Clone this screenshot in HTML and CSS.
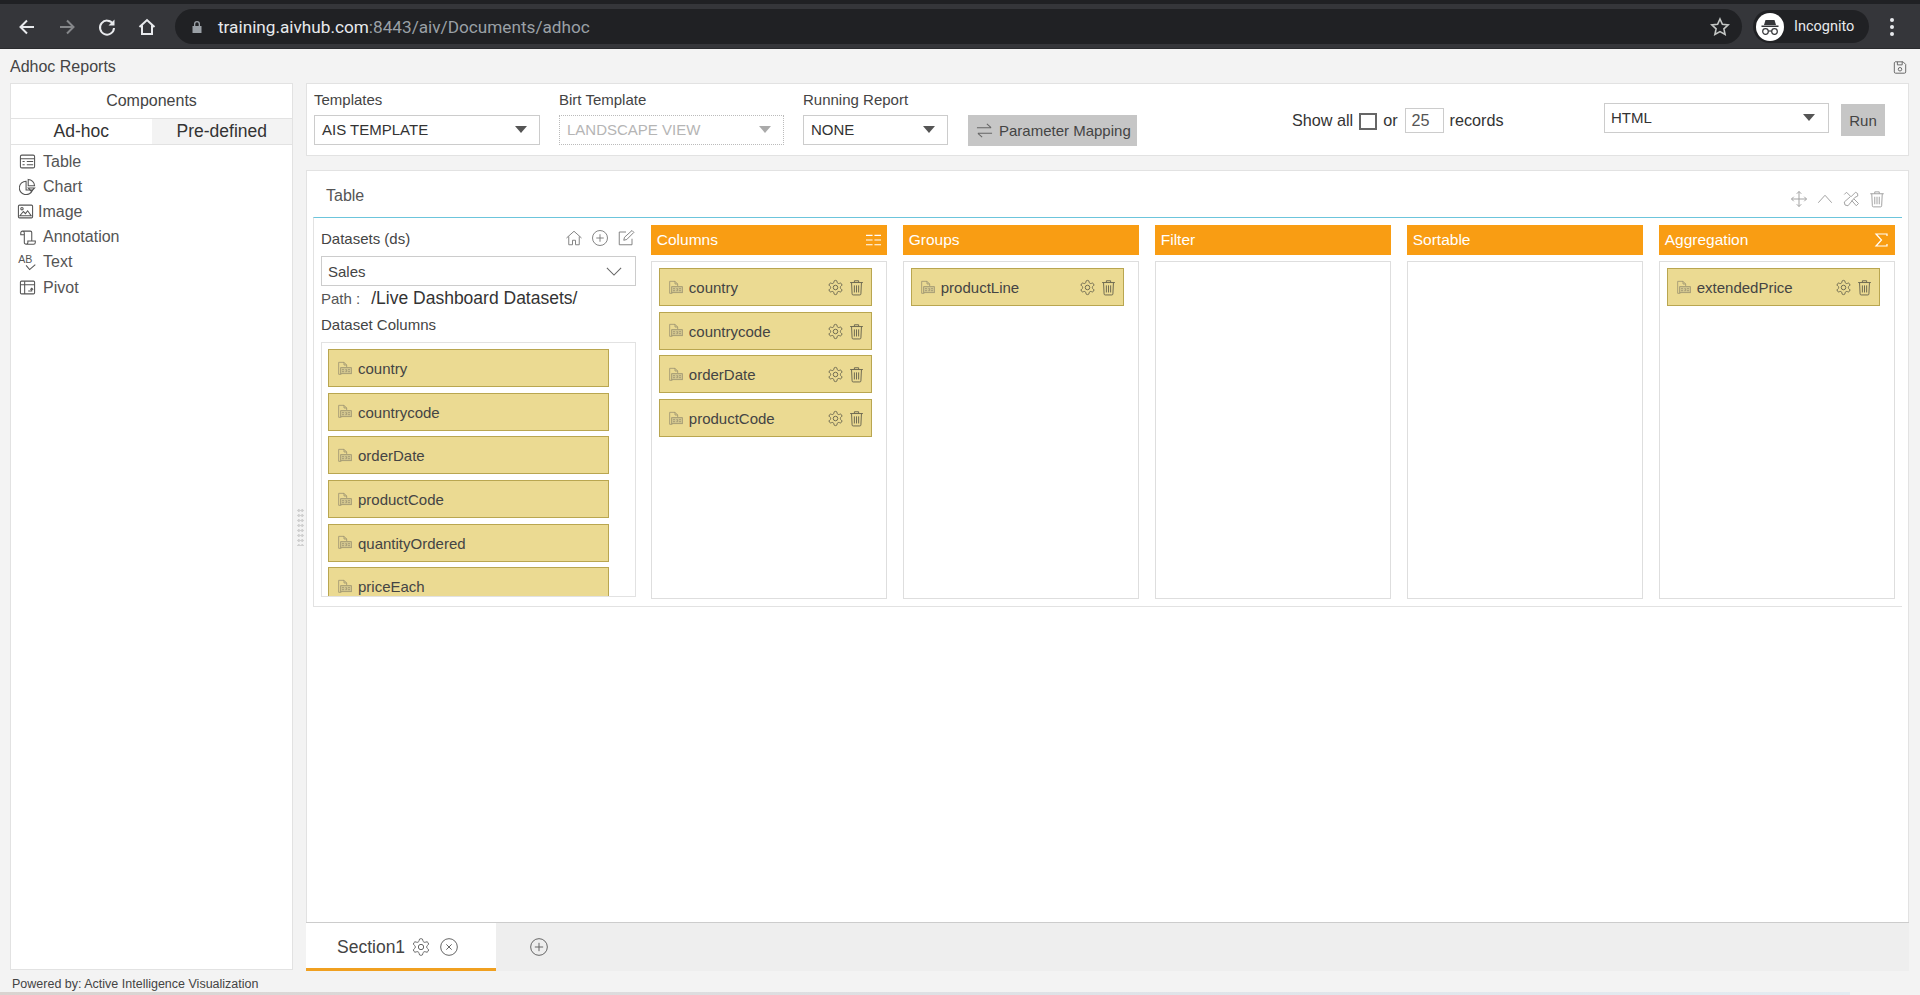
FILE: index.html
```html
<!DOCTYPE html>
<html lang="en">
<head>
<meta charset="utf-8">
<title>Adhoc Reports</title>
<link rel="stylesheet" href="styles.css">
</head>
<body>
<svg class="sprite" xmlns="http://www.w3.org/2000/svg">
  <symbol id="gear" viewBox="0 0 24 24"><path d="M12.22 2h-.44a2 2 0 0 0-2 2v.18a2 2 0 0 1-1 1.73l-.43.25a2 2 0 0 1-2 0l-.15-.08a2 2 0 0 0-2.73.73l-.22.38a2 2 0 0 0 .73 2.73l.15.1a2 2 0 0 1 1 1.72v.51a2 2 0 0 1-1 1.74l-.15.09a2 2 0 0 0-.73 2.73l.22.38a2 2 0 0 0 2.73.73l.15-.08a2 2 0 0 1 2 0l.43.25a2 2 0 0 1 1 1.73V20a2 2 0 0 0 2 2h.44a2 2 0 0 0 2-2v-.18a2 2 0 0 1 1-1.73l.43-.25a2 2 0 0 1 2 0l.15.08a2 2 0 0 0 2.73-.73l.22-.39a2 2 0 0 0-.73-2.73l-.15-.08a2 2 0 0 1-1-1.74v-.5a2 2 0 0 1 1-1.74l.15-.09a2 2 0 0 0 .73-2.73l-.22-.38a2 2 0 0 0-2.73-.73l-.15.08a2 2 0 0 1-2 0l-.43-.25a2 2 0 0 1-1-1.73V4a2 2 0 0 0-2-2z"/><circle cx="12" cy="12" r="3.2"/></symbol>
  <symbol id="trash" viewBox="0 0 24 24"><path d="M3 5h18M9 5V2.5h6V5M5 5l.8 16a1.5 1.5 0 0 0 1.5 1.5h9.4a1.5 1.5 0 0 0 1.5-1.5L19 5M9 9v10M12 9v10M15 9v10"/></symbol>
  <symbol id="csv" viewBox="0 0 24 24"><path d="M4 12V2h8l4 4v3M12 2v4h4M4 12v8h4"/><rect x="7" y="10" width="16" height="9" fill="#d4c78f"/><path d="M9 13h3M9 16h3M14 13h2v3h-2M18 13h3M18 16h3"/></symbol>
  <symbol id="tableic" viewBox="0 0 24 24"><rect x="2" y="3" width="20" height="18" rx="2"/><path d="M2 8h20M5 12h3M11 12h9M5 16.500h3M11 16.500h9"/></symbol>
  <symbol id="chartic" viewBox="0 0 24 24"><path d="M10 4.500a9.500 9.500 0 1 0 9 12.500h-9z"/><path d="M13 2a9.500 9.500 0 0 1 9 9h-9zM13 14h9l-4.500 5z"/></symbol>
  <symbol id="imageic" viewBox="0 0 24 24"><rect x="2" y="3" width="20" height="18" rx="1.500"/><circle cx="7" cy="8" r="1.700"/><path d="M4 18l5-6 3 3 3-4 5 7z"/></symbol>
  <symbol id="annotic" viewBox="0 0 24 24"><path d="M5 3h11a2 2 0 0 1 2 2v12M5 3a2.500 2.500 0 0 0-2.500 2.500V8h5V5.500A2.500 2.500 0 0 0 5 3zM7.500 8v11a2.500 2.500 0 0 0 2.500 2.500h10.500A2.500 2.500 0 0 0 23 19v-2H12.500v2a2.500 2.500 0 0 1-2.500 2.500"/></symbol>
  <symbol id="pivotic" viewBox="0 0 24 24"><rect x="2" y="3" width="20" height="18" rx="1.500"/><path d="M2 8h20M8 3v18M13 17h5v-4M16 15l2-2 2 2"/></symbol>
  <symbol id="plusc" viewBox="0 0 24 24"><circle cx="12" cy="12" r="10"/><path d="M12 7v10M7 12h10"/></symbol>
  <symbol id="closec" viewBox="0 0 24 24"><circle cx="12" cy="12" r="10"/><path d="M8.800 8.800l6.400 6.400M15.200 8.800l-6.400 6.400"/></symbol>
</svg>

<header class="chrome">
  <div class="chrome-strip"></div>
  <div class="chrome-bar">
    <svg class="nav nav-back" viewBox="0 0 20 20"><path d="M17 10H4M10 3.500L3.500 10l6.500 6.500"/></svg>
    <svg class="nav nav-fwd" viewBox="0 0 20 20"><path d="M3 10h13M10 3.500l6.500 6.500-6.500 6.500"/></svg>
    <svg class="nav nav-reload" viewBox="0 0 20 20"><path d="M16 7a7 7 0 1 0 1 4"/><path class="fill" d="M17.500 2.500v6h-6z"/></svg>
    <svg class="nav nav-home" viewBox="0 0 20 20"><path d="M2.500 10L10 3l7.500 7M5 8.500V17h10V8.500"/></svg>
    <div class="omnibox">
      <svg class="lock" viewBox="0 0 12 14"><path d="M3 6V4a3 3 0 0 1 6 0v2h1.500v7h-9V6zM4.300 6h3.400V4a1.700 1.700 0 0 0-3.400 0z"/></svg>
      <span class="url"><span class="url-host">training.aivhub.com</span>:8443/aiv/Documents/adhoc</span>
      <svg class="star" viewBox="0 0 20 20"><path d="M10 2l2.400 5.300 5.800.6-4.300 3.900 1.200 5.700L10 14.600l-5.100 2.900 1.200-5.700L1.800 7.900l5.800-.6z"/></svg>
    </div>
    <div class="incognito">
      <svg class="incog-avatar" viewBox="0 0 28 28"><circle cx="14" cy="14" r="14" fill="#fff"/><path class="incog-hat" d="M9.500 7h9l1.500 5H8zM5.500 12.500h17V14h-17z"/><circle class="incog-eye" cx="9.500" cy="18.500" r="2.800"/><circle class="incog-eye" cx="18.500" cy="18.500" r="2.800"/><path class="incog-eye" d="M12.300 18h3.400"/></svg>
      <span>Incognito</span>
    </div>
    <div class="kebab"><i></i><i></i><i></i></div>
  </div>
</header>

<div class="title-row">
  <span class="app-title">Adhoc Reports</span>
  <svg class="save" viewBox="0 0 16 16"><path d="M2.500 1.500h9l3 3v8.500a1.500 1.500 0 0 1-1.500 1.500H3A1.500 1.500 0 0 1 1.500 13V2.500zM5 1.500v3.500h5.500V1.500"/><circle cx="8" cy="10" r="2"/></svg>
</div>

<div class="workspace">
  <aside class="side">
    <div class="side-head">Components</div>
    <div class="side-tabs">
      <div class="side-tab">Ad-hoc</div>
      <div class="side-tab side-tab-alt">Pre-defined</div>
    </div>
    <ul class="side-list">
      <li><svg class="side-ic"><use href="#tableic"/></svg>Table</li>
      <li><svg class="side-ic"><use href="#chartic"/></svg>Chart</li>
      <li class="side-img"><svg class="side-ic"><use href="#imageic"/></svg>Image</li>
      <li><svg class="side-ic"><use href="#annotic"/></svg>Annotation</li>
      <li><svg class="side-ic" viewBox="0 0 24 24"><text class="ab" x="-1" y="12">AB</text><path d="M10 16l5 6 8-7"/></svg>Text</li>
      <li><svg class="side-ic"><use href="#pivotic"/></svg>Pivot</li>
    </ul>
  </aside>

  <div class="splitter"><div class="grip"></div></div>

  <main class="content">
    <section class="toolbar">
      <div class="field f-templates">
        <label class="field-label">Templates</label>
        <div class="select"><span>AIS TEMPLATE</span><i class="caret"></i></div>
      </div>
      <div class="field f-birt">
        <label class="field-label">Birt Template</label>
        <div class="select select-off"><span>LANDSCAPE VIEW</span><i class="caret"></i></div>
      </div>
      <div class="field f-running">
        <label class="field-label">Running Report</label>
        <div class="select"><span>NONE</span><i class="caret"></i></div>
      </div>
      <button class="param-btn">
        <svg class="swap" viewBox="0 0 18 18"><path d="M1 6h15M11.500 2L16 6M17 12H2M6.500 16L2 12"/></svg>
        Parameter Mapping
      </button>
      <div class="records">
        <span>Show all</span><i class="check"></i><span>or</span><span class="num">25</span><span>records</span>
      </div>
      <div class="select select-html"><span>HTML</span><i class="caret"></i></div>
      <button class="run-btn">Run</button>
    </section>

    <section class="designer">
      <div class="designer-head">
        <span class="designer-title">Table</span>
        <div class="designer-tools">
          <svg class="tool" viewBox="0 0 24 24"><path d="M12 2v20M2 12h20M9 5l3-3 3 3M9 19l3 3 3-3M5 9l-3 3 3 3M19 9l3 3-3 3"/></svg>
          <svg class="tool" viewBox="0 0 24 24"><path d="M3 17L12 7l9 10"/></svg>
          <svg class="tool" viewBox="0 0 24 24"><path d="M3 6l3-3 6 6 6-6a4 4 0 0 1 3 5l-4 2L8 21l-4-1-1-4 8-7M13 14l6 7 3-3-6-6"/></svg>
          <svg class="tool"><use href="#trash"/></svg>
        </div>
      </div>

      <div class="builder">
        <div class="datasets">
          <div class="ds-head">
            <span>Datasets (ds)</span>
            <div class="ds-tools">
              <svg class="ds-ic" viewBox="0 0 24 24"><path d="M2 12L12 3l10 9M5 10v11h5v-6h4v6h5V10"/></svg>
              <svg class="ds-ic"><use href="#plusc"/></svg>
              <svg class="ds-ic" viewBox="0 0 24 24"><path d="M20 13v8H3V4h9M9 15l1-4L20 2l2.500 2.500L13 14z"/></svg>
            </div>
          </div>
          <div class="ds-select"><span>Sales</span><svg class="chev" viewBox="0 0 18 10"><path d="M1 1l8 8 8-8"/></svg></div>
          <div class="ds-path"><span>Path :</span><span class="ds-path-val">/Live Dashboard Datasets/</span></div>
          <div class="ds-label">Dataset Columns</div>
          <div class="ds-list">
            <div class="chip chip-wide"><svg class="csv"><use href="#csv"/></svg><span class="chip-name">country</span></div>
            <div class="chip chip-wide"><svg class="csv"><use href="#csv"/></svg><span class="chip-name">countrycode</span></div>
            <div class="chip chip-wide"><svg class="csv"><use href="#csv"/></svg><span class="chip-name">orderDate</span></div>
            <div class="chip chip-wide"><svg class="csv"><use href="#csv"/></svg><span class="chip-name">productCode</span></div>
            <div class="chip chip-wide"><svg class="csv"><use href="#csv"/></svg><span class="chip-name">quantityOrdered</span></div>
            <div class="chip chip-wide"><svg class="csv"><use href="#csv"/></svg><span class="chip-name">priceEach</span></div>
          </div>
        </div>

        <div class="drop">
          <div class="drop-head"><span>Columns</span><svg class="drop-ic" viewBox="0 0 16 14"><path d="M0 2h7M9 2h7M0 7h7M9 7h7M0 12h7M9 12h7"/></svg></div>
          <div class="drop-body">
            <div class="chip"><svg class="csv"><use href="#csv"/></svg><span class="chip-name">country</span><svg class="chip-ic"><use href="#gear"/></svg><svg class="chip-ic"><use href="#trash"/></svg></div>
            <div class="chip"><svg class="csv"><use href="#csv"/></svg><span class="chip-name">countrycode</span><svg class="chip-ic"><use href="#gear"/></svg><svg class="chip-ic"><use href="#trash"/></svg></div>
            <div class="chip"><svg class="csv"><use href="#csv"/></svg><span class="chip-name">orderDate</span><svg class="chip-ic"><use href="#gear"/></svg><svg class="chip-ic"><use href="#trash"/></svg></div>
            <div class="chip"><svg class="csv"><use href="#csv"/></svg><span class="chip-name">productCode</span><svg class="chip-ic"><use href="#gear"/></svg><svg class="chip-ic"><use href="#trash"/></svg></div>
          </div>
        </div>
        <div class="drop">
          <div class="drop-head"><span>Groups</span></div>
          <div class="drop-body">
            <div class="chip"><svg class="csv"><use href="#csv"/></svg><span class="chip-name">productLine</span><svg class="chip-ic"><use href="#gear"/></svg><svg class="chip-ic"><use href="#trash"/></svg></div>
          </div>
        </div>
        <div class="drop">
          <div class="drop-head"><span>Filter</span></div>
          <div class="drop-body"></div>
        </div>
        <div class="drop">
          <div class="drop-head"><span>Sortable</span></div>
          <div class="drop-body"></div>
        </div>
        <div class="drop">
          <div class="drop-head"><span>Aggregation</span><svg class="drop-ic" viewBox="0 0 14 14"><path d="M12.500 3V1H1.500L7 7l-5.500 6h11v-2"/></svg></div>
          <div class="drop-body">
            <div class="chip"><svg class="csv"><use href="#csv"/></svg><span class="chip-name">extendedPrice</span><svg class="chip-ic"><use href="#gear"/></svg><svg class="chip-ic"><use href="#trash"/></svg></div>
          </div>
        </div>
      </div>
    </section>

    <nav class="sections">
      <div class="section-tab">
        <span>Section1</span>
        <svg class="sec-ic"><use href="#gear"/></svg>
        <svg class="sec-ic sec-close"><use href="#closec"/></svg>
      </div>
      <svg class="sec-ic sec-add"><use href="#plusc"/></svg>
    </nav>
  </main>
</div>

<footer class="powered">Powered by: Active Intelligence Visualization</footer>
<div class="bottom-strip"></div>
</body>
</html>
```

FILE: styles.css
```css
* { box-sizing: border-box; }
html, body { margin: 0; height: 100%; }
body {
  display: flex;
  flex-direction: column;
  height: 995px;
  overflow: hidden;
  background: #f3f3f3;
  color: #444;
  font-family: "Liberation Sans", Arial, sans-serif;
  font-size: 15px;
}
svg { display: block; flex: none; }
.sprite { display: none; }
button { font-family: inherit; border: 0; padding: 0; }
ul { list-style: none; margin: 0; padding: 0; }

/* browser chrome */
.chrome { height: 49px; flex: none; background: #35363a; border-bottom: 1px solid #2a2b2e; }
.chrome-strip { height: 4px; background: #202124; }
.chrome-bar { display: flex; align-items: center; height: 35px; margin-top: 5px; }
.nav { width: 20px; height: 20px; fill: none; stroke: #e8eaed; stroke-width: 2; }
.nav .fill { fill: #e8eaed; stroke: none; }
.nav-back { margin-left: 17px; }
.nav-fwd { margin-left: 20px; stroke: #85878a; }
.nav-reload { margin-left: 20px; }
.nav-home { margin-left: 20px; }
.omnibox {
  display: flex;
  align-items: center;
  width: 1567px;
  height: 35px;
  margin-left: 18px;
  padding-left: 16px;
  background: #202124;
  border-radius: 18px;
}
.lock { width: 12px; height: 14px; fill: #9aa0a6; fill-rule: evenodd; }
.url { margin-left: 15px; font: 17.200px Roboto, sans-serif; color: #9aa0a6; white-space: nowrap; }
.url-host { color: #e8eaed; }
.star { width: 20px; height: 20px; margin-left: auto; margin-right: 12px; fill: none; stroke: #c4c7c5; stroke-width: 1.6; }
.incognito {
  display: flex;
  align-items: center;
  width: 116px;
  height: 33px;
  margin-left: 11px;
  padding-left: 3px;
  background: #202124;
  border-radius: 17px;
  color: #e8eaed;
  font: 14.500px Roboto, sans-serif;
}
.incog-avatar { width: 28px; height: 28px; margin-right: 10px; }
.incog-hat { fill: #35363a; }
.incog-eye { fill: none; stroke: #35363a; stroke-width: 1.2; }
.kebab { display: flex; flex-direction: column; gap: 3px; margin-left: 21px; }
.kebab i { width: 4px; height: 4px; border-radius: 50%; background: #e8eaed; }

/* title */
.title-row { display: flex; align-items: center; justify-content: space-between; height: 34px; flex: none; padding: 2px 13px 0 10px; }
.app-title { font-size: 16px; color: #444; }
.save { width: 14px; height: 15px; fill: none; stroke: #666; stroke-width: 1.1; }

/* workspace */
.workspace { display: flex; height: 888px; flex: none; padding-left: 10px; }
.side { width: 283px; height: 887px; flex: none; background: #fff; border: 1px solid #e2e2e2; }
.side-head { height: 34px; line-height: 34px; text-align: center; font-size: 16px; }
.side-tabs { display: flex; height: 27px; border-top: 1px solid #e2e2e2; border-bottom: 1px solid #e2e2e2; }
.side-tab { flex: 1; text-align: center; font-size: 17.500px; line-height: 25px; color: #333; }
.side-tab-alt { background: #f3f3f3; }
.side-list { padding-top: 4px; }
.side-list li { display: flex; align-items: center; height: 25.200px; padding-left: 8px; font-size: 16px; color: #555; }
.side-ic { width: 17px; height: 17px; margin-right: 7px; fill: none; stroke: #555; stroke-width: 1.500; overflow: visible; }
.side-list .side-img { padding-left: 6px; }
.side-img .side-ic { margin-right: 4px; }
.ab { font: 15px "Liberation Sans", sans-serif; fill: #555; stroke: none; }

.splitter { width: 13px; flex: none; padding: 425px 0 0 4px; }
.grip {
  width: 7px;
  height: 38px;
  background-image: radial-gradient(circle, #d0d0d0 1.300px, transparent 1.500px);
  background-size: 3.500px 5px;
}

/* right column */
.content { display: flex; flex-direction: column; gap: 14px; width: 1603px; flex: none; }
.toolbar {
  position: relative;
  display: flex;
  align-items: flex-start;
  height: 73px;
  flex: none;
  padding: 8px 0 0 7px;
  background: #fff;
  border: 1px solid #e2e2e2;
}
.field { display: flex; flex-direction: column; flex: none; }
.field-label { height: 23px; line-height: 15px; font-size: 15px; color: #444; }
.f-templates { width: 226px; margin-right: 19px; }
.f-birt { width: 225px; margin-right: 19px; }
.f-running { width: 145px; margin-right: 20px; }
.select {
  display: flex;
  align-items: center;
  justify-content: space-between;
  height: 30px;
  padding: 0 12px 1px 7px;
  background: #fff;
  border: 1px solid #ccc;
  font-size: 15px;
  color: #333;
}
.caret { width: 0; height: 0; border-left: 6px solid transparent; border-right: 6px solid transparent; border-top: 7px solid #555; }
.select-off { border: 1px dotted #bbb; color: #b5b5b5; }
.select-off .caret { border-top-color: #aaa; }
.param-btn {
  display: flex;
  align-items: center;
  gap: 6px;
  width: 169px;
  height: 31px;
  margin-top: 23px;
  padding-left: 8px;
  background: #c6c6c6;
  color: #444;
  font-size: 15px;
  white-space: nowrap;
}
.swap { width: 17px; height: 17px; fill: none; stroke: #666; stroke-width: 1.1; }
.records { display: flex; align-items: center; gap: 6px; height: 26px; margin: 15px 0 0 155px; font-size: 16.200px; color: #333; flex: none; }
.check { width: 18px; height: 17px; margin-top: 2px; border: 2px solid #666; background: #fff; }
.num { width: 39px; height: 25px; margin: 0 0 0 1px; padding-left: 6px; line-height: 23px; border: 1px solid #ccc; color: #555; }
.select-html { position: absolute; top: 19px; left: 1297px; width: 225px; padding: 0 13px 1px 6px; }
.run-btn { position: absolute; top: 20px; left: 1534px; width: 44px; height: 32px; background: #c6c6c6; color: #444; font-size: 15px; }

.designer { display: flex; flex-direction: column; flex: 1; min-height: 0; background: #fff; border: 1px solid #e2e2e2; border-bottom: 0; }
.designer-head { display: flex; align-items: center; justify-content: space-between; height: 46px; flex: none; padding: 4px 22px 0 19px; }
.designer-title { font-size: 16px; color: #555; }
.designer-tools { display: flex; align-items: center; gap: 8px; padding-top: 5px; }
.tool { width: 18px; height: 18px; fill: none; stroke: #a0a0a0; stroke-width: 1.300; }

.builder {
  display: flex;
  gap: 15.600px;
  height: 390px;
  flex: none;
  margin: 0 6px 0 6px;
  padding: 7px 7px 7px 7px;
  border-top: 1px solid #6cc5dc;
  border-left: 1px solid #e2e2e2;
  border-bottom: 1px solid #e2e2e2;
}
.datasets { display: flex; flex-direction: column; width: 315px; height: 372px; flex: none; margin-right: -0.800px; }
.ds-head { display: flex; align-items: center; justify-content: space-between; height: 31px; padding-bottom: 5px; font-size: 15px; color: #444; }
.ds-tools { display: flex; gap: 8px; padding-right: 1px; }
.ds-ic { width: 18px; height: 18px; fill: none; stroke: #777; stroke-width: 1.200; }
.ds-select { display: flex; align-items: center; justify-content: space-between; height: 30px; padding: 0 13px 0 6px; border: 1px solid #ccc; font-size: 15px; color: #444; }
.chev { width: 16px; height: 9px; fill: none; stroke: #666; stroke-width: 1.200; }
.ds-path { display: flex; align-items: center; gap: 11px; height: 25px; font-size: 15px; color: #555; }
.ds-path-val { font-size: 17.500px; color: #333; }
.ds-label { height: 31px; padding-top: 4px; line-height: 19px; font-size: 15px; color: #444; }
.ds-list { flex: 1; min-height: 0; overflow: hidden; padding: 6px 0 0 6px; border: 1px solid #e2e2e2; }
.ds-list .chip { width: 281px; }

.drop { display: flex; flex-direction: column; width: 236.400px; flex: none; }
.drop-head { display: flex; align-items: center; justify-content: space-between; height: 30px; flex: none; padding: 0 6px 0 6px; background: #f99d13; color: #fff; font-size: 15.500px; }
.drop-ic { width: 15px; height: 14px; fill: none; stroke: #fff; stroke-width: 1.200; }
.drop-body { flex: 1; margin-top: 6px; padding: 6px 0 0 7px; border: 1px solid #dedede; background: #fff; }

.chip {
  display: flex;
  align-items: center;
  width: 213px;
  height: 38px;
  margin-bottom: 5.700px;
  padding: 1px 6px 0 7px;
  background: #ebda92;
  border: 1px solid #b9a650;
  color: #444;
  font-size: 15px;
}
.csv { width: 16px; height: 16px; margin-right: 6px; fill: none; stroke: #9a9270; stroke-width: 1.200; }
.chip-name { flex: 1; white-space: nowrap; }
.chip-ic { width: 17px; height: 17px; margin-left: 4px; fill: none; stroke: #6e6a52; stroke-width: 1.400; }

/* section tabs */
.sections { display: flex; align-items: center; height: 49px; flex: none; margin-top: -14px; background: #eee; border-top: 1px solid #ccc; }
.section-tab {
  display: flex;
  align-items: center;
  width: 190px;
  height: 48px;
  padding: 3px 0 0 31px;
  background: #fff;
  border-bottom: 3px solid #f0a020;
  font-size: 17.500px;
  color: #444;
}
.sec-ic { width: 20px; height: 20px; fill: none; stroke: #666; stroke-width: 1.200; }
.section-tab .sec-ic { margin-left: 6px; }
.section-tab .sec-close { margin-left: 8px; }
.sec-add { margin-left: 33px; }

.powered { height: 21px; flex: none; padding: 6px 0 0 12px; font-size: 12.500px; line-height: 15px; color: #444; }
.bottom-strip { height: 3px; flex: none; width: 1850px; background: linear-gradient(90deg, #d9d3d0, #dfe3e8 60%, #e4ecf2); }
```
